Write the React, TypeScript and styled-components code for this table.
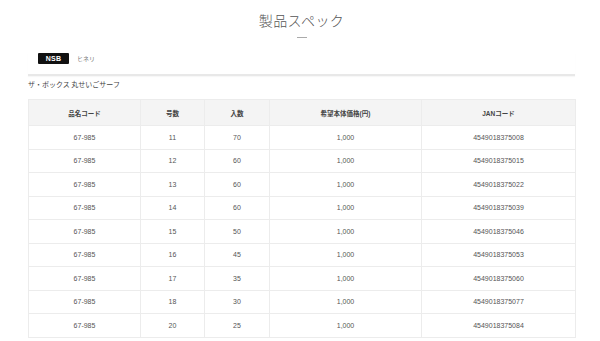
import React from "react";
import styled, { createGlobalStyle } from "styled-components";

const Global = createGlobalStyle`
  html, body { margin: 0; padding: 0; background: #fff; }
  body {
    font-family: "Liberation Sans", "Noto Sans CJK JP", sans-serif;
    color: #333;
    -webkit-font-smoothing: antialiased;
  }
`;

const Page = styled.div`
  width: 600px;
  height: 341px;
  overflow: hidden;
  box-sizing: border-box;
  padding: 0 25px 0 28px;
`;

const TitleBlock = styled.div`
  display: flex;
  flex-direction: column;
  align-items: center;
  padding-top: 10px;
`;

const Title = styled.h2`
  margin: 0;
  font-family: "Noto Sans CJK JP", sans-serif;
  font-size: 14px;
  font-weight: 300;
  line-height: 20px;
  color: #555;
  letter-spacing: 0.4px;
`;

const TitleRule = styled.span`
  display: block;
  width: 10px;
  height: 1px;
  background: #aaa;
  margin-top: 7px;
`;

const BrandRow = styled.div`
  display: flex;
  align-items: center;
  gap: 8px;
  margin-top: 15px;
  padding: 0 10px 10px;
  border-bottom: 2px solid #e8e8e8;
  box-shadow: 0 1px 1px rgba(0, 0, 0, 0.03);
`;

const Badge = styled.span`
  display: inline-flex;
  align-items: center;
  justify-content: center;
  width: 31px;
  height: 11px;
  background: #111;
  color: #fff;
  font-size: 7px;
  font-weight: 700;
  border-radius: 1px;
  letter-spacing: 0.3px;
`;

const BrandName = styled.span`
  font-family: "Noto Sans CJK JP", sans-serif;
  font-size: 6px;
  color: #777;
`;

const ProductName = styled.div`
  font-family: "Noto Sans CJK JP", sans-serif;
  font-size: 7px;
  color: #444;
  margin-top: 3px;
  line-height: 10px;
`;

const Table = styled.table`
  width: 547px;
  margin-top: 10px;
  border-collapse: collapse;
  table-layout: fixed;
  border: 1px solid #ececec;
`;

const HeadCell = styled.th`
  background: #f4f4f4;
  height: 26px;
  padding: 0;
  font-size: 6.5px;
  font-weight: 700;
  color: #444;
  text-align: center;
  border: 1px solid #ececec;
  box-sizing: border-box;
`;

const Cell = styled.td`
  height: 23.5px;
  padding: 0;
  font-size: 7px;
  color: #555;
  text-align: center;
  border: 1px solid #ececec;
  box-sizing: border-box;
`;

const columns = [
  { label: "品名コード", width: 112 },
  { label: "号数", width: 64 },
  { label: "入数", width: 65 },
  { label: "希望本体価格(円)", width: 152 },
  { label: "JANコード", width: 154 },
];

const rows = [
  ["67-985", "11", "70", "1,000", "4549018375008"],
  ["67-985", "12", "60", "1,000", "4549018375015"],
  ["67-985", "13", "60", "1,000", "4549018375022"],
  ["67-985", "14", "60", "1,000", "4549018375039"],
  ["67-985", "15", "50", "1,000", "4549018375046"],
  ["67-985", "16", "45", "1,000", "4549018375053"],
  ["67-985", "17", "35", "1,000", "4549018375060"],
  ["67-985", "18", "30", "1,000", "4549018375077"],
  ["67-985", "20", "25", "1,000", "4549018375084"],
];

export default function App() {
  return (
    <Page>
      <Global />
      <TitleBlock>
        <Title>製品スペック</Title>
        <TitleRule />
      </TitleBlock>
      <BrandRow>
        <Badge>NSB</Badge>
        <BrandName>ヒネリ</BrandName>
      </BrandRow>
      <ProductName>ザ・ボックス 丸せいごサーフ</ProductName>
      <Table>
        <colgroup>
          {columns.map((c) => (
            <col key={c.label} style={{ width: c.width }} />
          ))}
        </colgroup>
        <thead>
          <tr>
            {columns.map((c) => (
              <HeadCell key={c.label}>{c.label}</HeadCell>
            ))}
          </tr>
        </thead>
        <tbody>
          {rows.map((r, i) => (
            <tr key={i}>
              {r.map((v, j) => (
                <Cell key={j}>{v}</Cell>
              ))}
            </tr>
          ))}
        </tbody>
      </Table>
    </Page>
  );
}
